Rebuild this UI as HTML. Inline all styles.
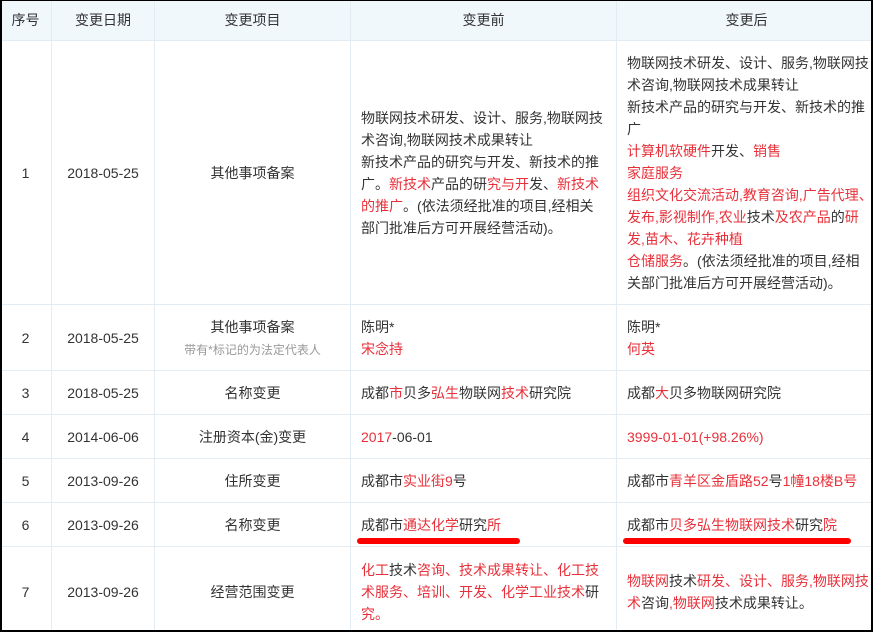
<!DOCTYPE html>
<html><head><meta charset="utf-8"><style>
*{margin:0;padding:0;box-sizing:border-box}
body{width:873px;height:632px;overflow:hidden;background:#fff;font-family:"Liberation Sans","Noto Sans CJK SC",sans-serif;font-size:14px;color:#333}
.wrap{position:absolute;left:0;top:0;width:873px;height:632px;border:2px solid #000;border-top-width:1px;overflow:hidden}
table{border-collapse:collapse;table-layout:fixed;position:absolute;left:-3px;top:-2px;width:877px}
td,th{border:1px solid #e4ecf3;font-weight:normal;line-height:22px;vertical-align:middle}
th{background:#f0f8fc;height:41px;text-align:center}
.c{text-align:center}
.l{text-align:left;padding:0 4px 0 10px}
.nw{white-space:nowrap;overflow:hidden}
.r{color:#e8303a}
.g{color:#999;font-size:12px;line-height:18px}
.u{position:absolute;height:6px;background:#f00;border-radius:3px;top:537px}
</style></head><body><div class="wrap">
<table>
<colgroup><col style="width:52px"><col style="width:103px"><col style="width:196px"><col style="width:266px"><col style="width:260px"></colgroup>
<tr><th>序号</th><th>变更日期</th><th>变更项目</th><th>变更前</th><th>变更后</th></tr>
<tr style="height:264px"><td class="c">1</td><td class="c">2018-05-25</td><td class="c">其他事项备案</td>
<td class="l nw">物联网技术研发、设计、服务,物联网技<br>术咨询,物联网技术成果转让<br>新技术产品的研究与开发、新技术的推<br>广。<span class="r">新技术</span>产品的研<span class="r">究与开</span>发、<span class="r">新技术</span><br><span class="r">的推广</span>。(依法须经批准的项目,经相关<br>部门批准后方可开展经营活动)。</td>
<td class="l nw" style="padding-right:0">物联网技术研发、设计、服务,物联网技<br>术咨询,物联网技术成果转让<br>新技术产品的研究与开发、新技术的推<br>广<br><span class="r">计算机软硬件</span>开发、<span class="r">销售</span><br><span class="r">家庭服务</span><br><span class="r">组织文化交流活动,教育咨询,广告代理、</span><br><span class="r">发布,影视制作,农业</span>技术<span class="r">及农产品</span>的<span class="r">研</span><br><span class="r">发,苗木、花卉种植</span><br><span class="r">仓储服务</span>。(依法须经批准的项目,经相<br>关部门批准后方可开展经营活动)。</td></tr>
<tr style="height:66px"><td class="c">2</td><td class="c">2018-05-25</td><td class="c">其他事项备案<br><span class="g">带有*标记的为法定代表人</span></td><td class="l">陈明*<br><span class="r">宋念持</span></td><td class="l">陈明*<br><span class="r">何英</span></td></tr>
<tr style="height:44px"><td class="c">3</td><td class="c">2018-05-25</td><td class="c">名称变更</td><td class="l">成都<span class="r">市</span>贝多<span class="r">弘生</span>物联网<span class="r">技术</span>研究院</td><td class="l">成都<span class="r">大</span>贝多物联网研究院</td></tr>
<tr style="height:44px"><td class="c">4</td><td class="c">2014-06-06</td><td class="c">注册资本(金)变更</td><td class="l"><span class="r">2017</span>-06-01</td><td class="l r">3999-01-01(+98.26%)</td></tr>
<tr style="height:44px"><td class="c">5</td><td class="c">2013-09-26</td><td class="c">住所变更</td><td class="l">成都市<span class="r">实业街9</span>号</td><td class="l">成都市<span class="r">青羊区金盾路52</span>号<span class="r">1幢18楼B号</span></td></tr>
<tr style="height:44px"><td class="c">6</td><td class="c">2013-09-26</td><td class="c">名称变更</td><td class="l">成都市<span class="r">通达化学</span>研究<span class="r">所</span></td><td class="l">成都市<span class="r">贝多弘生物联网技术</span>研究<span class="r">院</span></td></tr>
<tr style="height:90px"><td class="c">7</td><td class="c">2013-09-26</td><td class="c">经营范围变更</td><td class="l"><span class="r">化工</span>技术<span class="r">咨询、技术成果转让、化工技术服务、培训、开发、化学工业技术</span>研<span class="r">究。</span></td><td class="l nw" style="padding-right:0"><span class="r">物联网</span>技术<span class="r">研发、设计、服务,物联网技</span><br><span class="r">术</span>咨询<span class="r">,物联网</span>技术成果转让。</td></tr>
</table>
<div class="u" style="left:355px;width:163px"></div>
<div class="u" style="left:621px;width:228px"></div>
</div></body></html>
